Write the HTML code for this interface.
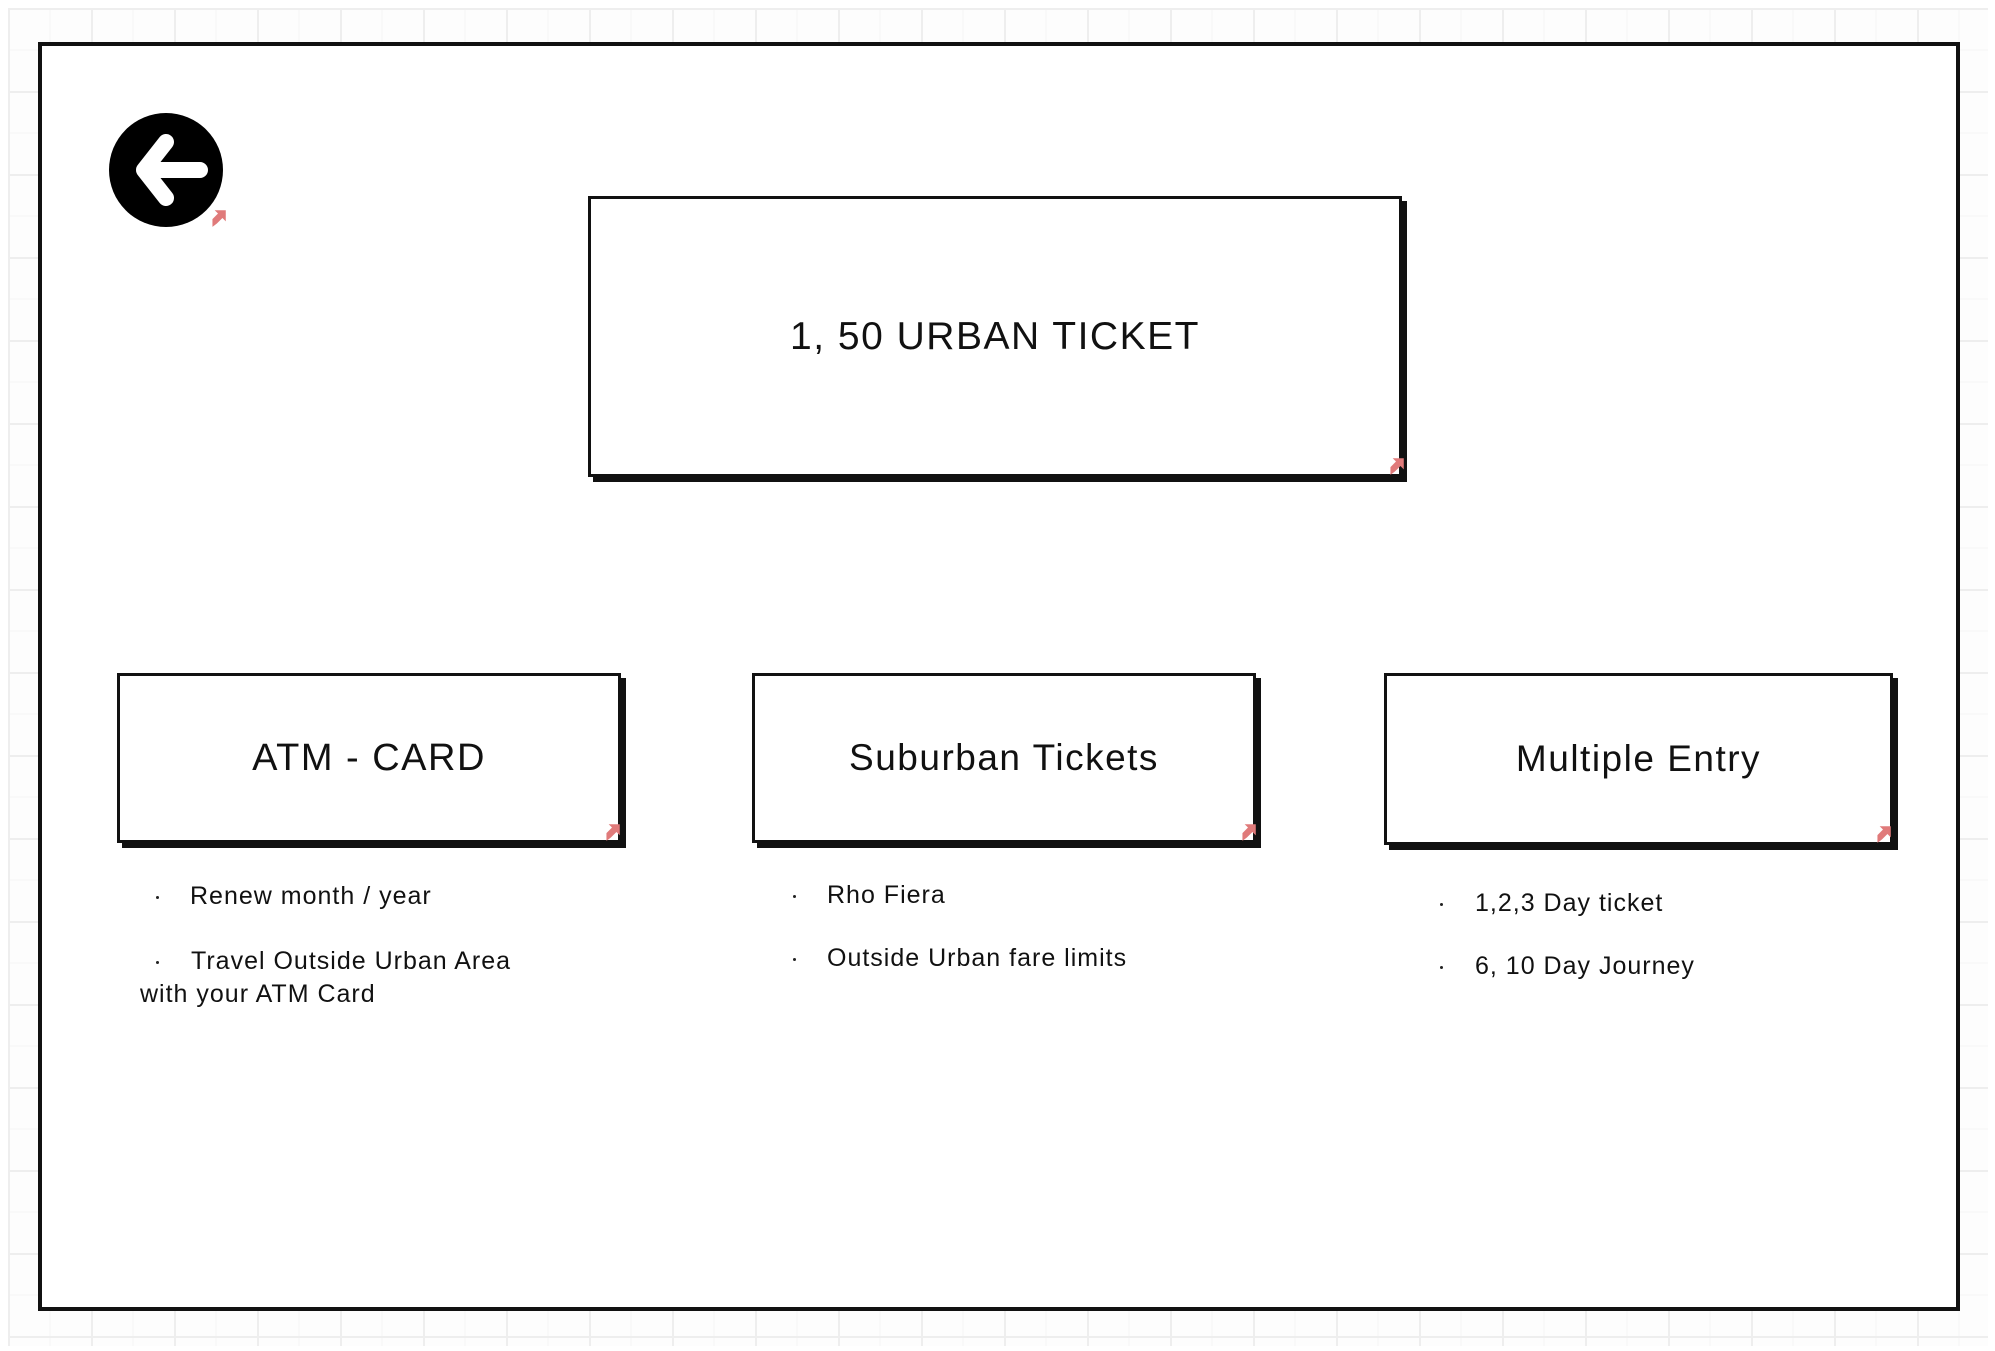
<!DOCTYPE html>
<html><head><meta charset="utf-8"><style>
html,body{margin:0;padding:0;}
body{width:1995px;height:1351px;position:relative;overflow:hidden;background:#fff;font-family:"Liberation Sans",sans-serif;color:#111;}
.grid{position:absolute;left:8px;top:8px;width:1980px;height:1338px;background-color:#fdfdfd;
background-image:linear-gradient(#eeeeee 2px,transparent 2px),linear-gradient(90deg,#eeeeee 2px,transparent 2px),linear-gradient(#f5f5f5 1px,transparent 1px),linear-gradient(90deg,#f5f5f5 1px,transparent 1px);
background-size:83px 83px,83px 83px,41.5px 41.5px,41.5px 41.5px;}
.frame{position:absolute;left:38px;top:42px;width:1914px;height:1261px;border:4px solid #111;background:#fff;}
.box{position:absolute;border:3px solid #111;background:#fff;box-shadow:5px 5px 0 #111;display:flex;align-items:center;justify-content:center;box-sizing:border-box;}
.pk{position:absolute;width:20px;height:20px;}
.t{position:absolute;font-size:25px;white-space:nowrap;line-height:30px;letter-spacing:1px;}
.d{position:absolute;width:3px;height:3px;background:#222;border-radius:50%;}
</style></head><body>
<div class="grid"></div>
<div class="frame"></div>

<svg style="position:absolute;left:108px;top:112px" width="116" height="116" viewBox="0 0 116 116">
<circle cx="58" cy="58" r="57" fill="#000"/>
<path d="M58 30 L36 58 L58 86 M38 58 H92" stroke="#fff" stroke-width="16" stroke-linecap="round" stroke-linejoin="round" fill="none"/>
</svg>
<svg class="pk" style="left:208px;top:208px" viewBox="0 0 18 18"><path d="M4 17 L4 10 L9 5 L6 2 L16 2 L16 12 L13 9 L8 14 Z" fill="#e07a7a"/></svg>

<div class="box" style="left:588px;top:196px;width:814px;height:281px;"><span style="font-size:39px;letter-spacing:1.5px;">1, 50 URBAN TICKET</span></div>
<svg class="pk" style="left:1386px;top:456px" viewBox="0 0 18 18"><path d="M4 17 L4 10 L9 5 L6 2 L16 2 L16 12 L13 9 L8 14 Z" fill="#e07a7a"/></svg>

<div class="box" style="left:117px;top:673px;width:504px;height:170px;"><span style="font-size:38px;letter-spacing:1.5px;">ATM - CARD</span></div>
<svg class="pk" style="left:602px;top:822px" viewBox="0 0 18 18"><path d="M4 17 L4 10 L9 5 L6 2 L16 2 L16 12 L13 9 L8 14 Z" fill="#e07a7a"/></svg>
<div class="box" style="left:752px;top:673px;width:504px;height:170px;"><span style="font-size:37px;letter-spacing:1.5px;">Suburban Tickets</span></div>
<svg class="pk" style="left:1238px;top:822px" viewBox="0 0 18 18"><path d="M4 17 L4 10 L9 5 L6 2 L16 2 L16 12 L13 9 L8 14 Z" fill="#e07a7a"/></svg>
<div class="box" style="left:1384px;top:673px;width:509px;height:172px;"><span style="font-size:37px;letter-spacing:1.5px;">Multiple Entry</span></div>
<svg class="pk" style="left:1873px;top:824px" viewBox="0 0 18 18"><path d="M4 17 L4 10 L9 5 L6 2 L16 2 L16 12 L13 9 L8 14 Z" fill="#e07a7a"/></svg>

<div class="d" style="left:156px;top:896px"></div>
<div class="t" style="left:190px;top:881px">Renew month / year</div>
<div class="d" style="left:156px;top:961px"></div>
<div class="t" style="left:191px;top:946px">Travel Outside Urban Area</div>
<div class="t" style="left:140px;top:979px">with your ATM Card</div>

<div class="d" style="left:793px;top:895px"></div>
<div class="t" style="left:827px;top:880px">Rho Fiera</div>
<div class="d" style="left:793px;top:958px"></div>
<div class="t" style="left:827px;top:943px">Outside Urban fare limits</div>

<div class="d" style="left:1440px;top:903px"></div>
<div class="t" style="left:1475px;top:888px">1,2,3 Day ticket</div>
<div class="d" style="left:1440px;top:966px"></div>
<div class="t" style="left:1475px;top:951px">6, 10 Day Journey</div>
</body></html>
